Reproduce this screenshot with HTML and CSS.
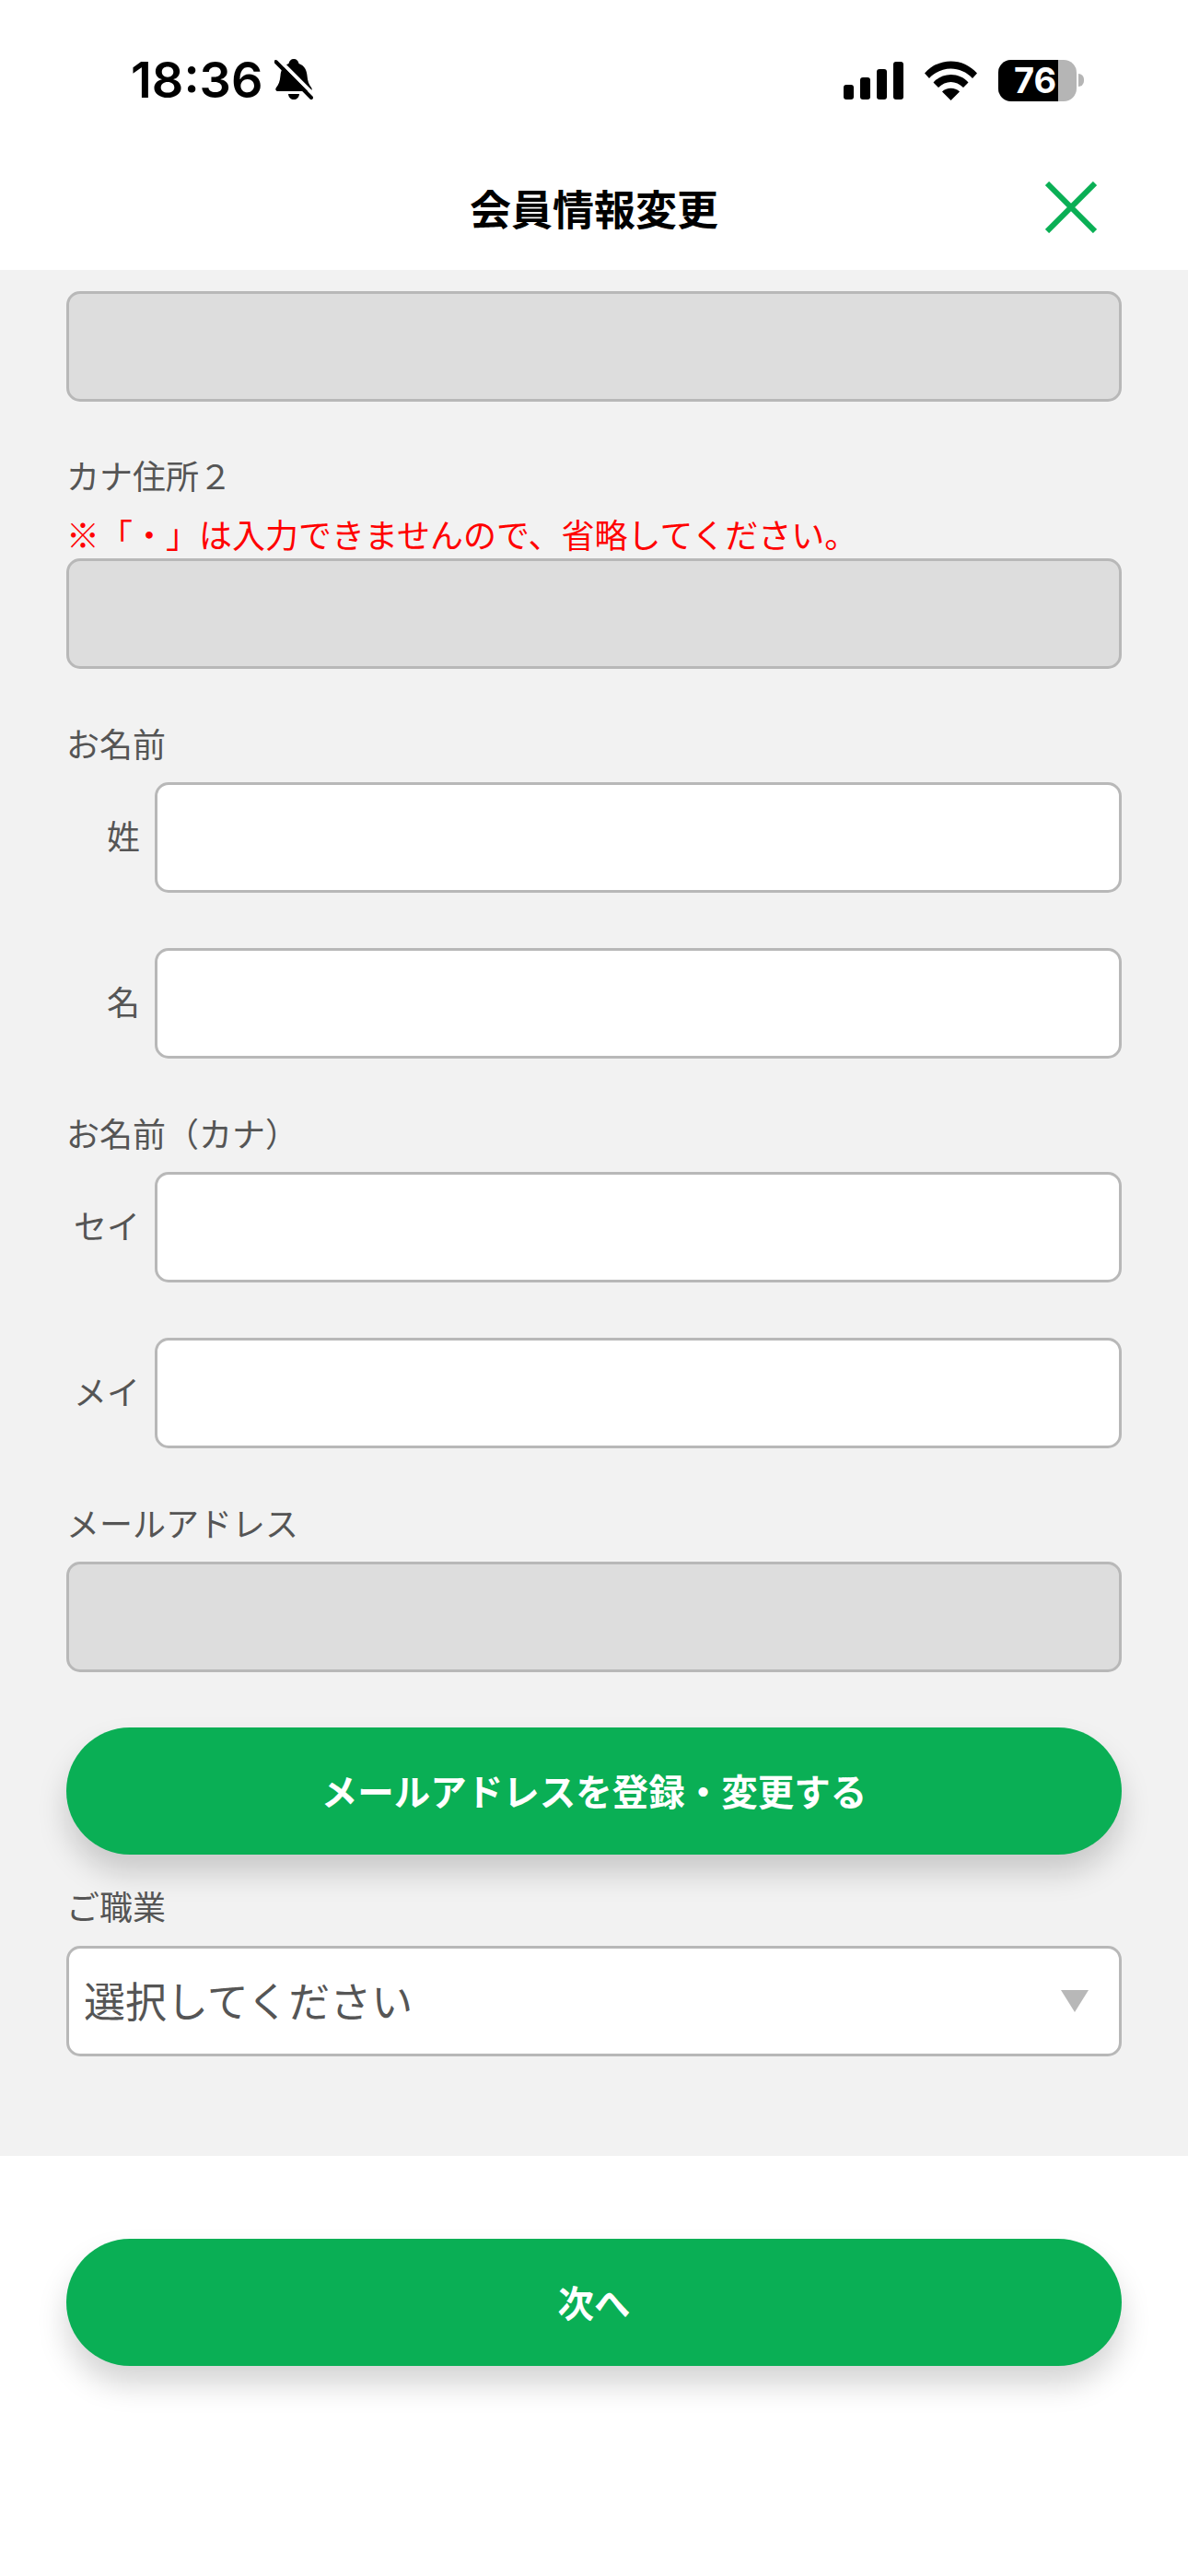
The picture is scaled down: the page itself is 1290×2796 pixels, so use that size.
FILE: index.html
```html
<!DOCTYPE html>
<html lang="ja">

<head>
    <meta charset="UTF-8">
    <meta name="viewport" content="width=device-width, initial-scale=1.0">
    <title>会員情報変更</title>
    <link rel="stylesheet" href="styles.css">
</head>

<body>
    <div class="status_bar">
        <div class="status_left">
            <span class="time">18:36</span>
            <svg class="bell" width="42" height="46" viewBox="0 0 42 46">
                <path d="M21 0c3 0 5 2 5.500 5 6 2 8.500 7 9 13 .5 6 2 10 4.500 13 1.500 2 .5 4-2 4H4c-2.500 0-3.500-2-2-4 2.500-3 4-7 4.500-13 .5-6 3-11 9-13C16 2 18 0 21 0z" fill="#000" />
                <path d="M15 38h12c-.5 4-3 6-6 6s-5.500-2-6-6z" fill="#000" />
                <path d="M4 0l38 38" stroke="#fff" stroke-width="4" />
                <path d="M1.500 3l38.500 39" stroke="#000" stroke-width="4" stroke-linecap="round" />
            </svg>
        </div>
        <div class="status_right">
            <div class="signal">
                <span class="bar bar1"></span>
                <span class="bar bar2"></span>
                <span class="bar bar3"></span>
                <span class="bar bar4"></span>
            </div>
            <svg class="wifi" width="57" height="43" viewBox="0 0 57 43">
                <path d="M0 13.500C15 -4 42 -4 57 13.500L52 19C39 5 18 5 5 19z" fill="#000" />
                <path d="M9.500 23.500C19 12 38 12 47.500 23.500L42 29C34 21 23 21 15 29z" fill="#000" />
                <path d="M19 33.500C24 28.500 33 28.500 38 33.500L28.500 43z" fill="#000" />
            </svg>
            <div class="battery">
                <div class="battery_body">
                    <div class="battery_level">76</div>
                </div>
                <div class="battery_nub"></div>
            </div>
        </div>
    </div>

    <div class="title_bar">
        <h1>会員情報変更</h1>
        <svg class="close" width="56" height="56" viewBox="0 0 56 56">
            <path d="M2 2l52 52M54 2L2 54" stroke="#0aaf55" stroke-width="6" fill="none" />
        </svg>
    </div>

    <form class="content">
        <input class="field_input" type="text" disabled>

        <label class="field_label label_address">カナ住所２</label>
        <p class="note">※「・」は入力できませんので、省略してください。</p>
        <input class="field_input" type="text" disabled>

        <label class="field_label label_name">お名前</label>
        <div class="name_row">
            <label class="name_label">姓</label>
            <input class="field_input" type="text">
        </div>
        <div class="name_row next_row">
            <label class="name_label">名</label>
            <input class="field_input" type="text">
        </div>

        <label class="field_label label_name">お名前（カナ）</label>
        <div class="name_row">
            <label class="name_label">セイ</label>
            <input class="field_input" type="text">
        </div>
        <div class="name_row next_row">
            <label class="name_label">メイ</label>
            <input class="field_input" type="text">
        </div>

        <label class="field_label label_name">メールアドレス</label>
        <input class="field_input" type="text" disabled>

        <button class="green_button mail_button" type="button">メールアドレスを登録・変更する</button>

        <label class="field_label label_job">ご職業</label>
        <div class="select_wrap">
            <select class="job_select">
                <option>選択してください</option>
            </select>
        </div>
    </form>

    <div class="footer">
        <button class="green_button" type="button">次へ</button>
    </div>
</body>

</html>
```

FILE: styles.css
```css
* {
    box-sizing: border-box;
}

body {
    margin: 0;
    height: 2796px;
    overflow: hidden;
    background-color: #fff;
    color: #555;
    font-family: "Noto Sans CJK JP", "Noto Sans", sans-serif;
}

.status_bar {
    display: flex;
    justify-content: space-between;
    align-items: center;
    height: 130px;
    padding: 44px 113px 0 142px;
}

.status_left {
    display: flex;
    align-items: center;
    gap: 12px;
}

.time {
    font-family: Inter, sans-serif;
    font-size: 54px;
    font-weight: 600;
    line-height: 46px;
    color: #000;
}

.status_right {
    display: flex;
    align-items: center;
    gap: 23px;
}

.signal {
    display: flex;
    align-items: flex-end;
    gap: 7px;
    height: 41px;
}

.bar {
    width: 11px;
    background-color: #000;
    border-radius: 3px;
}

.bar1 { height: 16px; }
.bar2 { height: 24px; }
.bar3 { height: 33px; }
.bar4 { height: 41px; }

.battery {
    display: flex;
    align-items: center;
    gap: 2px;
}

.battery_body {
    width: 85px;
    height: 45px;
    border-radius: 14px;
    background-color: #b5b5b5;
    overflow: hidden;
}

.battery_level {
    width: 65px;
    height: 45px;
    padding-left: 17px;
    background-color: #000;
    color: #fff;
    font-family: Inter, sans-serif;
    font-size: 38px;
    font-weight: 700;
    line-height: 45px;
    white-space: nowrap;
    overflow: hidden;
}

.battery_nub {
    width: 6px;
    height: 14px;
    border-radius: 0 7px 7px 0;
    background-color: #b5b5b5;
}

.title_bar {
    display: flex;
    justify-content: center;
    align-items: center;
    position: relative;
    height: 163px;
    padding-top: 29px;
}

.title_bar h1 {
    margin: 0;
    font-size: 45px;
    font-weight: 700;
    line-height: 60px;
    color: #000;
}

.close {
    position: absolute;
    left: 1135px;
    top: 67px;
}

.content {
    height: 2047px;
    padding: 23px 72px 0;
    background-color: #f2f2f2;
}

.field_input {
    display: block;
    width: 100%;
    height: 120px;
    border: 3px solid #b8b8b8;
    border-radius: 15px;
    background-color: #fff;
}

.field_input:disabled {
    background-color: #ddd;
}

.field_label {
    display: block;
    font-size: 36px;
    line-height: 54px;
}

.label_address {
    margin-top: 52px;
    margin-bottom: 2px;
}

.label_name {
    margin-top: 53px;
    margin-bottom: 16px;
}

.label_job {
    margin-top: 28px;
    margin-bottom: 17px;
}

.note {
    margin: 0;
    height: 62px;
    padding-top: 8px;
    color: #f00;
    font-size: 36px;
    line-height: 54px;
    white-space: nowrap;
}

.name_row {
    display: flex;
    align-items: center;
    gap: 16px;
}

.next_row {
    margin-top: 60px;
}

.name_label {
    flex: none;
    width: 80px;
    padding-bottom: 6px;
    font-size: 36px;
    line-height: 54px;
    text-align: right;
}

.green_button {
    display: block;
    width: 100%;
    height: 138px;
    padding-bottom: 5px;
    border: none;
    border-radius: 69px;
    background-color: #0aaf55;
    box-shadow: 0 20px 32px rgba(0, 0, 0, .17);
    color: #fff;
    font-family: "Noto Sans CJK JP", "Noto Sans", sans-serif;
    font-size: 39.5px;
    font-weight: 700;
}

.mail_button {
    margin-top: 60px;
}

.select_wrap {
    position: relative;
}

.select_wrap::after {
    content: "";
    position: absolute;
    left: 1080px;
    top: 48px;
    border-top: 24px solid #b8b8b8;
    border-left: 15px solid transparent;
    border-right: 15px solid transparent;
}

.job_select {
    display: block;
    width: 100%;
    height: 120px;
    padding-left: 16px;
    padding-bottom: 4px;
    border: 3px solid #b8b8b8;
    border-radius: 15px;
    background-color: #fff;
    appearance: none;
    color: #555;
    font-family: "Noto Sans CJK JP", "Noto Sans", sans-serif;
    font-size: 45px;
}

.footer {
    padding: 90px 72px 0;
}
```
